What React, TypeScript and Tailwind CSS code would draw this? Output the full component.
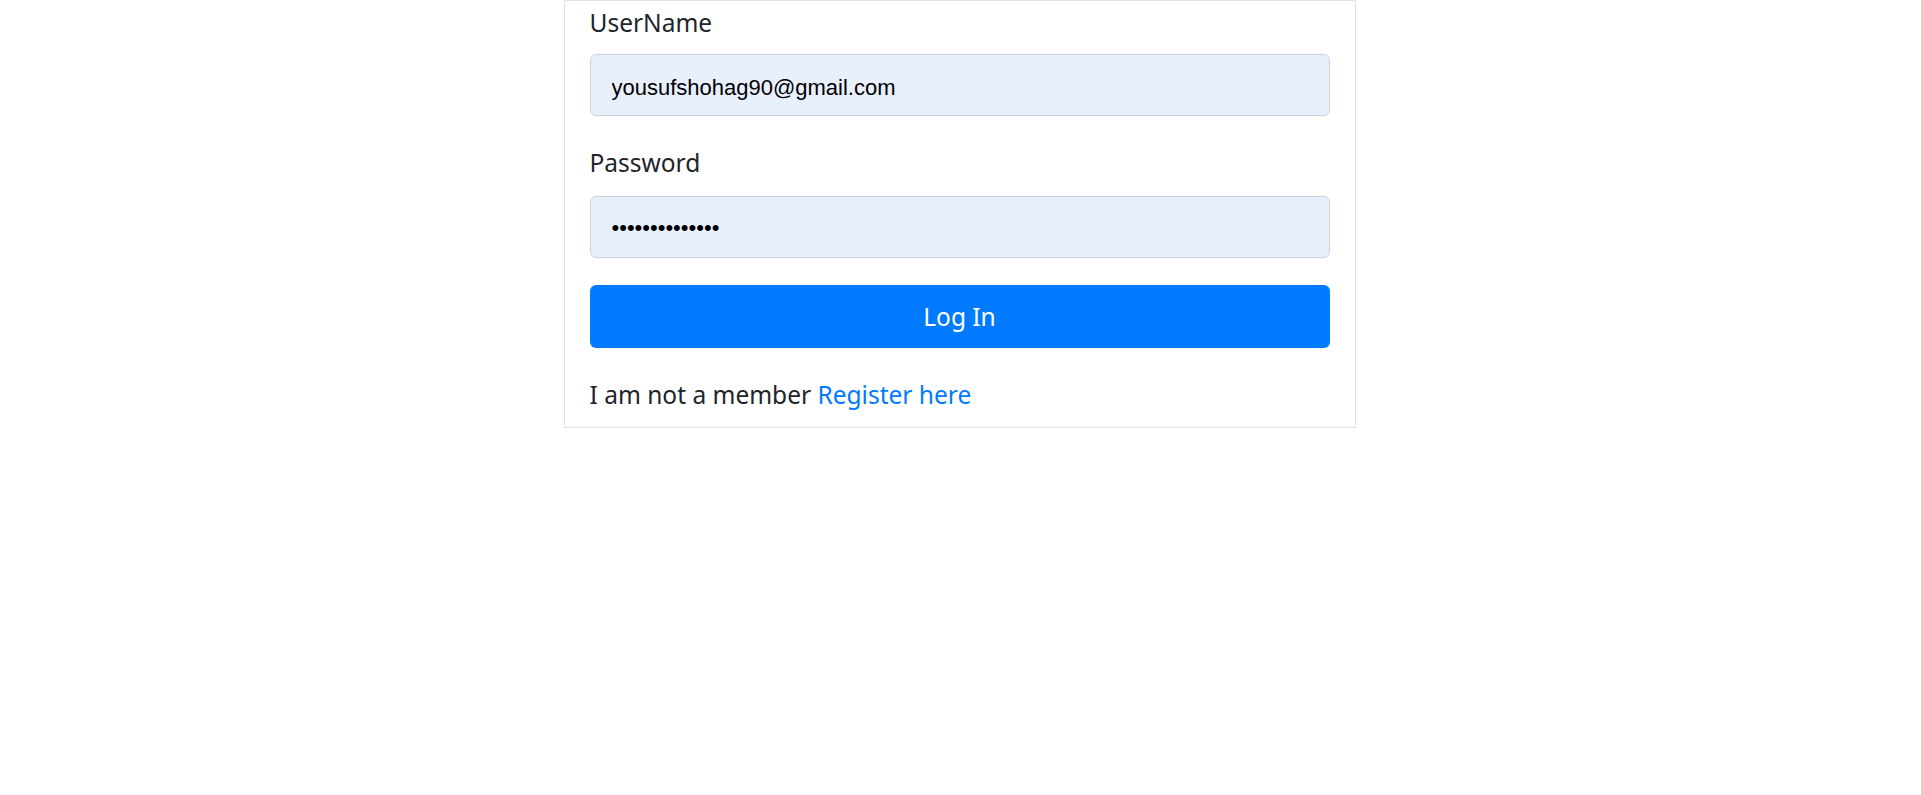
export default function App() {
  return (
    <div className="min-h-screen w-full bg-white" style={{ fontFamily: '"Noto Sans", "Open Sans", sans-serif' }}>
      <div className="mx-auto w-[792px] -translate-x-px border border-[#dfe1e6] bg-white px-[25px] pt-[3px] pb-[13px] text-[#212529]">
        {/* UserName */}
        <label className="block text-[24.5px] leading-[38px] mb-[12px]">UserName</label>
        <input
          type="text"
          readOnly
          defaultValue="yousufshohag90@gmail.com"
          className="block w-full h-[62px] rounded-[6px] border border-[#cdd4de] bg-[#e8f0fe] pl-[21px] pt-[5px] text-[22px] text-black outline-none"
          style={{ fontFamily: '"Liberation Sans", Arial, sans-serif' }}
        />

        {/* Password */}
        <label className="block mt-[28px] text-[24.5px] leading-[38px] mb-[14px]">Password</label>
        <input
          type="password"
          readOnly
          defaultValue="yousufshohag90"
          className="block w-full h-[62px] rounded-[6px] border border-[#cdd4de] bg-[#e8f0fe] pl-[21px] pt-[2px] text-[22px] text-black outline-none"
          style={{ fontFamily: '"Liberation Sans", Arial, sans-serif' }}
        />

        <button className="mt-[27px] flex h-[63px] w-full items-center justify-center rounded-[6px] bg-[#007bff] pt-[2px] text-[24.5px] text-white">
          Log In
        </button>

        <p className="mt-[28px] text-[24.5px] leading-[38px]">
          I am not a member <a href="#" className="text-[#007bff]">Register here</a>
        </p>
      </div>
    </div>
  );
}
